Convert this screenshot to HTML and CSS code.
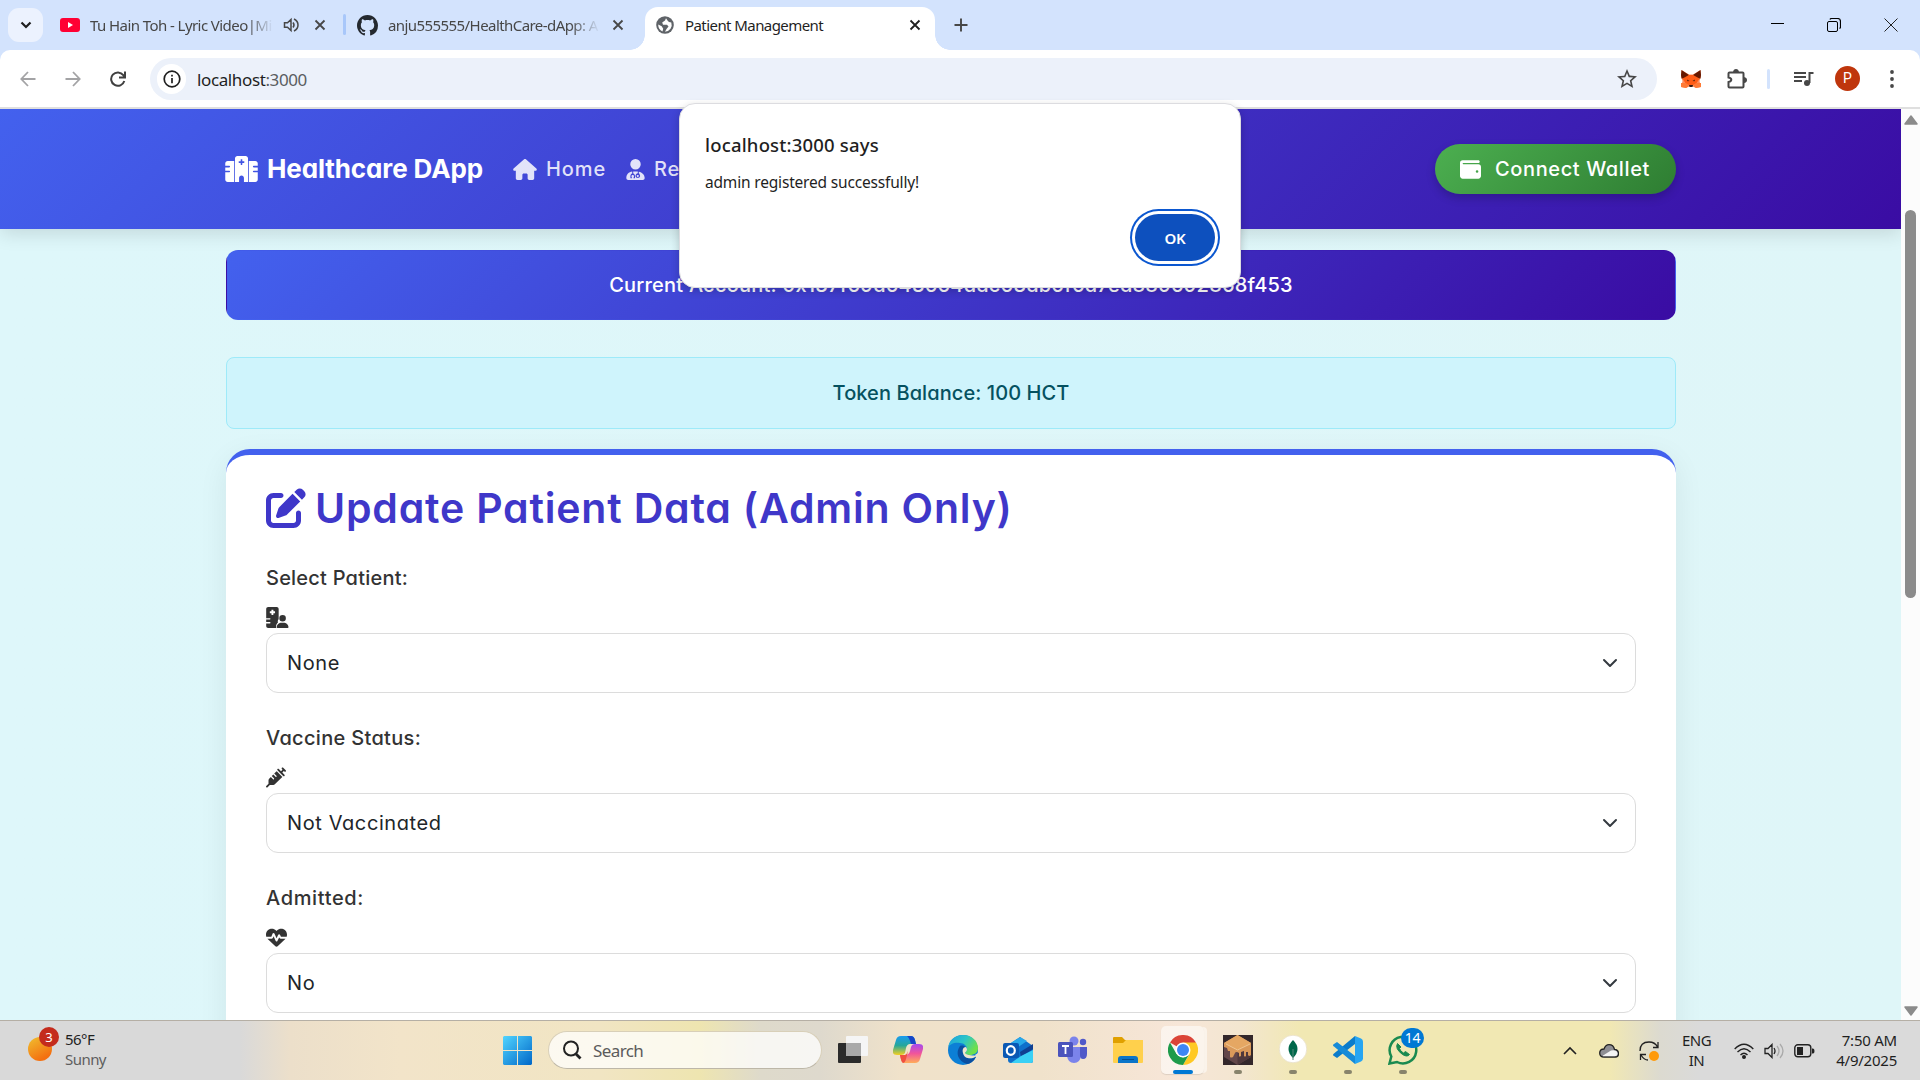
FILE: index.html
```html
<!DOCTYPE html>
<html lang="en">
<head>
<meta charset="utf-8">
<title>Patient Management</title>
<link rel="stylesheet" href="styles.css">
</head>
<body>
<div class="tabstrip">
  <div class="tab-search"><svg width="14" height="14" viewBox="0 0 14 14"><path d="M2.500 4.500 7 9l4.500-4.500" fill="none" stroke="#1f1f1f" stroke-width="2.200"/></svg></div>
  <div class="tab tab-video">
    <svg width="20" height="14" viewBox="0 0 20 14"><rect width="20" height="14" rx="3" fill="#ff0033"/><path d="M8 4v6l5-3z" fill="#fff"/></svg>
    <span class="tab-title fade">Tu Hain Toh - Lyric Video|Mi</span>
    <svg class="speaker" width="16" height="16" viewBox="0 0 16 16" fill="none" stroke="#474747" stroke-width="1.500"><path d="M1.500 5.800h3L8 2.500v11L4.500 10.200h-3zM10 5.500q2 2.500 0 5M11 2q4 2 4 6t-4 6"/></svg>
    <svg class="x" width="12" height="12" viewBox="0 0 12 12"><path d="m1.500 1.500 9 9m0-9-9 9" stroke="#474747" stroke-width="1.800"/></svg>
  </div>
  <div class="tab-sep"></div>
  <div class="tab tab-repo">
    <svg width="21" height="21" viewBox="0 0 16 16"><path fill="#24292f" d="M8 0C3.580 0 0 3.580 0 8c0 3.540 2.290 6.530 5.470 7.590.4.070.550-.170.550-.380 0-.190-.010-.820-.010-1.490-2.010.370-2.530-.490-2.690-.940-.090-.230-.480-.940-.820-1.130-.280-.150-.680-.520-.010-.530.630-.010 1.080.580 1.230.820.720 1.210 1.870.870 2.330.660.070-.520.280-.870.510-1.070-1.780-.200-3.640-.890-3.640-3.950 0-.870.310-1.590.820-2.150-.080-.200-.360-1.020.080-2.120 0 0 .670-.210 2.200.820.640-.180 1.320-.270 2-.270s1.360.090 2 .270c1.530-1.040 2.200-.820 2.200-.820.440 1.100.160 1.920.080 2.120.510.560.820 1.270.820 2.150 0 3.070-1.870 3.750-3.650 3.950.290.250.540.730.540 1.480 0 1.070-.010 1.930-.010 2.200 0 .210.150.460.550.380A8.010 8.010 0 0 0 16 8c0-4.420-3.580-8-8-8z"/></svg>
    <span class="tab-title fade">anju555555/HealthCare-dApp: A</span>
    <svg class="x" width="12" height="12" viewBox="0 0 12 12"><path d="m1.500 1.500 9 9m0-9-9 9" stroke="#474747" stroke-width="1.800"/></svg>
  </div>
  <div class="tab tab-active">
    <svg width="18" height="18" viewBox="0 0 18 18"><circle cx="9" cy="9" r="8.800" fill="#5f6368"/><path d="M10 2.200 9 4.500 6.200 6.500l.8 2.300h4l1.500 1.700-2 2.500-1.500 2.800q3.500-.2 5.500-3t.8-6.300l-2.300-.5-1.500-1.500zM2.200 8.500l3.500 1.800 1.500 2.500-.7 2.700Q2.200 13.500 2.200 8.500z" fill="#fff"/></svg>
    <span class="tab-title">Patient Management</span>
    <svg class="x" width="12" height="12" viewBox="0 0 12 12"><path d="m1.500 1.500 9 9m0-9-9 9" stroke="#1f1f1f" stroke-width="1.800"/></svg>
  </div>
  <svg class="newtab" width="14" height="14" viewBox="0 0 14 14"><path d="M7 .5v13M.5 7h13" stroke="#474747" stroke-width="1.900"/></svg>
  <div class="winbtns">
    <svg width="14" height="14" viewBox="0 0 14 14"><path d="M1 5.500h13" stroke="#000"/></svg>
    <svg width="14" height="14" viewBox="0 0 14 14" fill="none" stroke="#000"><rect x=".5" y="3.500" width="10" height="10" rx="1.500"/><path d="M3 1.500Q3.300.5 4.500.5h6q3 0 3 3v5.500q0 1-1 1.500" stroke-width="1.200"/></svg>
    <svg width="14" height="14" viewBox="0 0 14 14"><path d="m.5.5 13 13m0-13-13 13" stroke="#222"/></svg>
  </div>
</div>

<div class="toolbar-wrap"><div class="toolbar">
  <svg class="nav back" width="16" height="16" viewBox="0 0 16 16" fill="none" stroke="#a3a3a5" stroke-width="1.800"><path d="M15.500 8H1.500M8 1 1.300 8 8 15"/></svg>
  <svg class="nav forward" width="16" height="16" viewBox="0 0 16 16" fill="none" stroke="#a3a3a5" stroke-width="1.800"><path d="M.5 8h14M8 1l6.700 7L8 15"/></svg>
  <svg class="nav reload" width="16" height="16" viewBox="0 0 16 16" fill="none" stroke="#404040" stroke-width="2"><path d="M14.300 10A6.700 6.700 0 1 1 13.300 4.200L14.500 6M15 .5V6.500H9"/></svg>
  <div class="omnibox">
    <div class="site-info"><svg width="18" height="18" viewBox="0 0 18 18" fill="none" stroke="#1f1f1f"><circle cx="9" cy="9" r="7.800" stroke-width="1.700"/><path d="M9 8v5.200M9 4.700v1.800" stroke-width="1.700"/></svg></div>
    <span class="url">localhost<span class="port">:3000</span></span>
    <svg class="star" width="20" height="20" viewBox="2 2 20 20"><path fill="#474747" d="m22 9.240-7.190-.620L12 2 9.190 8.630 2 9.240l5.460 4.730L5.820 21 12 17.270 18.180 21l-1.630-7.030L22 9.240zM12 15.400l-3.760 2.270 1-4.280-3.320-2.880 4.380-.380L12 6.100l1.710 4.040 4.380.380-3.320 2.880 1 4.280L12 15.400z"/></svg>
  </div>
  <svg class="fox" width="20" height="18" viewBox="0 0 20 18"><path d="M.5 0 8 4.500h4L19.500 0 20 6l-1.500 5L20 17l-5 1-3-1.500H8L5 18l-5-1 1.500-6L0 6z" fill="#ff8d5d"/><path d="M.5 0 8 5 5.500 8.500.5 8.500 0 5zM19.500 0 12 5l2.500 3.500h5L20 5z" fill="#661800"/><path d="M1.500 8.500 8 5h4l6.500 3.500L15 14l-3 1H8l-3-1z" fill="#ff5c16"/><path d="M0 13h5l3 3-3 2-5-1zM20 13h-5l-3 3 3 2 5-1z" fill="#ff7a35"/><path d="M6 9.500 8.500 11l-2 .3zM14 9.500 11.500 11l2 .3zM8 15h4l-.5 2h-3z" fill="#3a1a10"/></svg>
  <svg class="puzzle" width="22" height="22" viewBox="0 0 22 22"><path d="M3.500 4h4.500q.3-2 2-2t2 2h4q2 0 2 2v4q2.500.2 2.500 2t-2.500 2v4q0 2-2 2H3.500q-1.500 0-1.500-1.500v-4q2.500-.7 2.500-2.500T2 9.500v-4Q2 4 3.500 4z" fill="#fff"/><path d="M3.500 4.500h13q1 0 1 1v13q0 1-1 1h-13q-1 0-1-1V14q2.800-.7 2.800-2.300T2.500 9.500v-4q0-1 1-1z" fill="none" stroke="#474747" stroke-width="2"/><path d="M7 4q.5-3 3-3t3 3zM18 9q3 .5 3 3t-3 3z" fill="#474747"/></svg>
  <div class="tool-sep"></div>
  <svg class="queue" width="20" height="16" viewBox="0 0 20 16" fill="none" stroke="#474747" stroke-width="2"><path d="M0 2h12M0 6h12M0 10h8M15.500 12V2H19.500"/><circle cx="13" cy="12" r="3" fill="#474747" stroke="none"/></svg>
  <div class="avatar">P</div>
  <svg class="dots" width="4" height="18" viewBox="0 0 4 18" fill="#474747"><circle cx="2" cy="2" r="1.900"/><circle cx="2" cy="9" r="1.900"/><circle cx="2" cy="16" r="1.900"/></svg>
</div></div>

<div class="viewport">
  <div class="page">
    <header class="navbar">
      <svg class="brand-icon" width="33" height="26" viewBox="0 0 640 512"><path fill="#fff" fill-rule="evenodd" d="M192 48c0-26.500 21.500-48 48-48h160c26.500 0 48 21.500 48 48v464h-80v-80c0-26.500-21.500-48-48-48s-48 21.500-48 48v80h-80zM48 96h128v416H48c-26.500 0-48-21.500-48-48V320h80c8.800 0 16-7.200 16-16s-7.200-16-16-16H0v-64h80c8.800 0 16-7.200 16-16s-7.200-16-16-16H0v-48c0-26.500 21.500-48 48-48zM464 96h128c26.500 0 48 21.500 48 48v48h-80c-8.800 0-16 7.200-16 16s7.200 16 16 16h80v64h-80c-8.800 0-16 7.200-16 16s7.200 16 16 16h80v144c0 26.500-21.500 48-48 48H464zM304 72v32h-32c-5 0-8 3-8 8v16c0 5 3 8 8 8h32v32c0 5 3 8 8 8h16c5 0 8-3 8-8v-32h32c5 0 8-3 8-8v-16c0-5-3-8-8-8h-32V72c0-5-3-8-8-8h-16c-5 0-8 3-8 8z"/></svg>
      <span class="brand">Healthcare DApp</span>
      <svg class="home-icon" width="24" height="21" viewBox="0 0 576 512"><path d="M575.800 255.500c0 18-15 32.100-32 32.100h-32l.7 160.200c0 2.700-.2 5.400-.5 8.100V472c0 22.100-17.900 40-40 40H456c-1.100 0-2.200 0-3.300-.1c-1.400 .1-2.800 .1-4.200 .1H416 392c-22.100 0-40-17.900-40-40V448 384c0-17.700-14.300-32-32-32H256c-17.700 0-32 14.300-32 32v64 24c0 22.100-17.900 40-40 40H160 128.100c-1.500 0-3-.1-4.500-.2c-1.200 .1-2.400 .2-3.600 .2H104c-22.100 0-40-17.900-40-40V360c0-.9 0-1.900 .1-2.800V287.600H32c-18 0-32-14-32-32.100c0-9 3-17 10-24L266.400 8c7-7 15-8 22-8s15 2 21 7L564.800 231.500c8 7 12 15 11 24z"/></svg>
      <span class="nav-link nav-home">Home</span>
      <svg class="doctor-icon" width="19" height="21" viewBox="0 0 448 512"><path fill-rule="evenodd" d="M224 256A128 128 0 1 0 224 0a128 128 0 1 0 0 256zM144 306v50c-27 8-44 33-44 63v37c0 9 5 12 12 12h24v-26h-10v-23c0-36 60-36 60 0v23h-10v26h20c9 0 16-3 16-12v-37c0-30-17-55-44-63v-50q56-6 112 0v40c-32 7-56 36-56 70 0 65 112 65 112 0 0-34-24-63-32-70v-38c84 18 144 75 144 156 0 26-21 48-48 48H48c-27 0-48-22-48-48 0-88 60-145 144-158zM280 390a24 24 0 1 0 .1 0z"/></svg>
      <span class="nav-link">Register</span>
      <button class="wallet">
        <svg width="21" height="21" viewBox="0 0 512 512"><path fill="#fff" d="M64 32C28.700 32 0 60.700 0 96V416c0 35.300 28.700 64 64 64H448c35.300 0 64-28.700 64-64V192c0-35.300-28.700-64-64-64H80c-8.800 0-16-7.200-16-16s7.200-16 16-16H448c17.700 0 32-14.300 32-32s-14.300-32-32-32H64zM416 272a32 32 0 1 1 0 64 32 32 0 1 1 0-64z"/></svg>
        <span class="wallet-label">Connect Wallet</span>
      </button>
    </header>
    <main class="content">
      <div class="account"><span>Current Account: 0x137f69d643664adc63db6f6d7ed889692868f453</span></div>
      <div class="balance"><span>Token Balance: 100 HCT</span></div>
      <section class="card">
        <h2 class="card-title"><svg width="40" height="40" viewBox="0 0 512 512"><path fill="#3f37c9" d="M471.600 21.700c-21.900-21.900-57.300-21.900-79.200 0L362.300 51.700l97.900 97.900 30.100-30.100c21.900-21.900 21.900-57.300 0-79.200L471.600 21.700zm-299.200 220c-6.100 6.100-10.800 13.600-13.500 21.900l-29.600 88.800c-2.900 8.600-.6 18.100 5.800 24.600s15.900 8.700 24.600 5.800l88.800-29.600c8.200-2.700 15.700-7.400 21.900-13.500L437.700 172.300 339.700 74.300 172.400 241.700zM96 64C43 64 0 107 0 160V416c0 53 43 96 96 96H352c53 0 96-43 96-96V320c0-17.700-14.300-32-32-32s-32 14.300-32 32v96c0 17.700-14.300 32-32 32H96c-17.700 0-32-14.300-32-32V160c0-17.700 14.300-32 32-32h96c17.700 0 32-14.300 32-32s-14.300-32-32-32H96z"/></svg><span>Update Patient Data (Admin Only)</span></h2>
        <div class="field">
          <label class="label-patient">Select Patient:</label>
          <svg width="24" height="21" viewBox="0 0 576 512"><path fill="#333" fill-rule="evenodd" d="M48 0h208c26 0 48 22 48 48v250c-25 20-24 60-16 78-28 25-48 60-48 104 0 12 3 24 9 32H48c-27 0-48-22-48-48V400h90c9 0 16-7 16-16s-7-16-16-16H0v-64h90c9 0 16-7 16-16s-7-16-16-16H0V48C0 22 22 0 48 0zM136 64c-5 0-8 3-8 8v32H96c-5 0-8 3-8 8v32c0 5 3 8 8 8h32v32c0 5 3 8 8 8h32c5 0 8-3 8-8v-32h32c5 0 8-3 8-8v-32c0-5-3-8-8-8h-32V72c0-5-3-8-8-8zM400 192a80 80 0 1 1 0 160 80 80 0 1 1 0-160zM377 384h46c67 0 121 50 121 108 0 11-9 20-20 20H276c-11 0-20-9-20-20 0-58 54-108 121-108z"/></svg>
          <div class="select"><span>None</span><svg width="16" height="16" viewBox="0 0 16 16"><path fill="none" stroke="#343a40" stroke-linecap="round" stroke-linejoin="round" stroke-width="2" d="m2 5 6 6 6-6"/></svg></div>
        </div>
        <div class="field">
          <label class="label-vaccine">Vaccine Status:</label>
          <svg width="20" height="21" viewBox="0 0 512 512"><path fill="#333" d="M441 7l32 32 32 32c9.400 9.400 9.400 24.600 0 33.900s-24.600 9.400-33.900 0l-15-15L417.900 128l55 55c9.400 9.400 9.400 24.600 0 33.900s-24.600 9.400-33.900 0l-72-72L295 73c-9.400-9.400-9.400-24.600 0-33.900s24.600-9.400 33.900 0l55 55L422.100 56 407 41c-9.400-9.400-9.400-24.600 0-33.900s24.600-9.400 33.900 0zM210.300 155.700l61.100-61.100c.3 .3 .6 .7 1 1l16 16 56 56 56 56 16 16c.3 .3 .6 .6 1 1l-191 191c-10.500 10.500-24.700 16.400-39.600 16.400H97.900L41 505c-9.400 9.400-24.600 9.400-33.900 0s-9.400-24.600 0-33.900l57-57V325.300c0-14.900 5.900-29.100 16.400-39.600l43.300-43.300 57 57c6.200 6.200 16.400 6.200 22.600 0s6.200-16.400 0-22.600l-57-57 41.400-41.400 57 57c6.200 6.200 16.400 6.200 22.600 0s6.200-16.400 0-22.600l-57-57z"/></svg>
          <div class="select"><span>Not Vaccinated</span><svg width="16" height="16" viewBox="0 0 16 16"><path fill="none" stroke="#343a40" stroke-linecap="round" stroke-linejoin="round" stroke-width="2" d="m2 5 6 6 6-6"/></svg></div>
        </div>
        <div class="field">
          <label class="label-admitted">Admitted:</label>
          <svg width="21" height="21" viewBox="0 0 512 512"><path fill="#333" d="M228.300 469.100L47.600 300.400c-4.200-3.900-8.200-8.100-11.900-12.400h87c22.600 0 43-13.600 51.700-34.500l10.500-25.200 49.300 109.500c3.800 8.500 12.100 14 21.400 14.100s17.800-5 22-13.300L320 253.700l1.700 3.400c9.500 19 28.900 31 50.100 31H476.300c-3.700 4.300-7.700 8.500-11.900 12.400L283.700 469.100c-7.500 7-17.400 10.900-27.700 10.900s-20.200-3.900-27.700-10.900zM503.700 240h-132c-3 0-5.800-1.700-7.200-4.400l-23.200-46.300c-4.100-8.100-12.400-13.300-21.500-13.300s-17.400 5.100-21.500 13.300l-41.400 82.800L205.900 158.200c-3.900-8.700-12.700-14.300-22.200-14.100s-18.100 5.900-21.800 14.800l-31.800 76.300c-1.200 3-4.200 4.900-7.400 4.900H16c-2.600 0-5 .4-7.300 1.100C3 225.200 0 208.200 0 190.900v-5.800c0-69.900 50.500-129.500 119.400-141C165 36.500 211.400 51.400 244 84l12 12 12-12c32.600-32.600 79-47.500 124.600-39.900C461.500 55.600 512 115.200 512 185.100v5.800c0 16.900-2.800 33.500-8.300 49.100z"/></svg>
          <div class="select"><span>No</span><svg width="16" height="16" viewBox="0 0 16 16"><path fill="none" stroke="#343a40" stroke-linecap="round" stroke-linejoin="round" stroke-width="2" d="m2 5 6 6 6-6"/></svg></div>
        </div>
      </section>
    </main>
  </div>
  <div class="scrollbar">
    <svg width="14" height="10" viewBox="0 0 14 10"><path d="M7 1 13 9H1z" fill="#8b8b8b" stroke="#8b8b8b" stroke-width="1.500" stroke-linejoin="round"/></svg>
    <div class="thumb"></div>
    <svg class="down" width="14" height="10" viewBox="0 0 14 10"><path d="M7 9 13 1H1z" fill="#8b8b8b" stroke="#8b8b8b" stroke-width="1.500" stroke-linejoin="round"/></svg>
  </div>
</div>

<div class="taskbar">
  <div class="weather">
    <div class="sun"><span class="sun-badge">3</span></div>
    <div class="weather-text"><span>56°F</span><span class="sunny">Sunny</span></div>
  </div>
  <div class="apps">
    <svg class="start" width="29" height="29" viewBox="0 0 29 29"><defs><linearGradient id="win" x1="0" y1="0" x2="1" y2="1"><stop offset="0" stop-color="#52d5ff"/><stop offset="1" stop-color="#0067c8"/></linearGradient></defs><path fill="url(#win)" d="M1 0h13v14H0V1zM15 0h13l1 1v13H15zM0 15h14v14H1l-1-1zM15 15h14v13l-1 1H15z"/></svg>
    <div class="search"><svg width="20" height="20" viewBox="0 0 20 20" fill="none" stroke="#222"><circle cx="9" cy="8.500" r="7" stroke-width="2"/><path d="m14 14 4.500 4.500" stroke-width="2.800"/></svg><span>Search</span></div>
    <div class="app"><svg width="30" height="30" viewBox="0 0 30 30"><rect x="0" y="8" width="23" height="20" rx="1" fill="#2b2b2b"/><rect x="8" y="1" width="22" height="20" rx="1" fill="#f5f5f5"/><path d="M8 8h15v13H8z" fill="#a9a9a9"/></svg></div>
    <div class="app"><svg width="30" height="30" viewBox="0 0 30 30"><defs><linearGradient id="ca" x1="0" y1="0" x2="0" y2="1"><stop offset="0" stop-color="#1a9bf0"/><stop offset=".5" stop-color="#26a79a"/><stop offset="1" stop-color="#f5cf20"/></linearGradient><linearGradient id="cb" x1="0" y1="0" x2="0" y2="1"><stop offset="0" stop-color="#a44af0"/><stop offset=".5" stop-color="#f1559a"/><stop offset="1" stop-color="#ffad5a"/></linearGradient></defs><path d="M8 1h10q3 0 4 4l1 4h-6q-3 0-4 4l-1 5q-1 2-4 2H4q-5 0-4-5L3 5q1-4 5-4z" fill="url(#ca)"/><path d="M14 1h4q3 0 4 4l1 4h-5q-2-7-4-8z" fill="#1546c8"/><path d="M22 28H12q-3 0-4-4l-1-4h5q4 0 5-4l1-4q1-3 4-3h4q5 0 4 5l-3 10q-1 4-5 4z" fill="url(#cb)"/><path d="M7 20h5q2-1 3-4l-2 8q-1 4-3 4-2-1-3-8z" fill="#f05040"/></svg></div>
    <div class="app"><svg width="30" height="30" viewBox="0 0 30 30"><defs><linearGradient id="ea" x1="0" y1="0" x2="1" y2=".5"><stop offset="0" stop-color="#1b9de2"/><stop offset=".55" stop-color="#2cc6c6"/><stop offset="1" stop-color="#6fe04a"/></linearGradient></defs><circle cx="15" cy="15" r="15" fill="#0c7fd6"/><path d="M0 13C1 5 7 0 15 0c9 0 15 6 15 13 0 5-4 7-8 7-3 0-5-1-5-2s2-1 2-4-3-6-7-6C7 7 1 9 0 13z" fill="url(#ea)"/><path d="M12 11c-5 7-2 15 7 18 3 0 7-3 9-7-6 3-13 1-13-5 0-3 2-4 2-5s-3-2-5-1z" fill="#0b4fa0"/><path d="M17 18c0-1 2-1 2-4l-1-2c-3 0-4 3-3 6 1 5 6 6 10 5l4-2c-3-1-10 0-12-3z" fill="#f0e4cd"/><path d="M27 20l3-2v6h-3q1-1 1-2z" fill="#f0e4cd"/></svg></div>
    <div class="app"><svg width="30" height="30" viewBox="0 0 30 30"><path d="M5 10 17 2l13 9v15q0 2-2 2H8q-3 0-3-3z" fill="#0f6fcb"/><path d="m5 10 12-8 7 4-16 11z" fill="#28a8ea"/><path d="M17 17 30 9v5L18 22z" fill="#103f91"/><path d="M30 15v11q0 2-2 2H8l10-7z" fill="#3ad0f5"/><rect y="8" width="16" height="15" rx="2" fill="#0a58b4"/><ellipse cx="7.800" cy="15.500" rx="4" ry="4.400" fill="none" stroke="#fff" stroke-width="2.200"/></svg></div>
    <div class="app"><svg width="30" height="30" viewBox="0 0 30 30"><circle cx="16" cy="6" r="4.500" fill="#7b83eb"/><circle cx="25" cy="7" r="3.200" fill="#5059c9"/><path d="M9 12h14v9q-1 7-7 7t-7-7z" fill="#7b83eb"/><path d="M22 12h7v7q0 5-4 5-3 0-3-4z" fill="#5059c9"/><rect y="7" width="15" height="15" rx="1.500" fill="#4b53bc"/><path d="M4 11h7M7.500 11v8" stroke="#fff" stroke-width="1.800"/></svg></div>
    <div class="app"><svg width="30" height="30" viewBox="0 0 30 30"><path d="M0 3q0-1 1-1h8l3 3h17q1 0 1 1v6H0z" fill="#e0a000"/><path d="M0 8h10l3-3h17v22q0 1-1 1H1q-1 0-1-1z" fill="#ffd04c"/><path d="M5 28v-4q0-3 3-3h14q3 0 3 3v4z" fill="#0b75c9"/><path d="M9 24.500h12" stroke="#064f90"/></svg></div>
    <div class="app active"><svg width="30" height="30" viewBox="0 0 30 30"><path d="M15 15 2 7.500A15 15 0 0 1 28 7.500z" fill="#db4437"/><path d="M28 7.500H15L21.500 19 15 30A15 15 0 0 0 28 7.500z" fill="#ffc925"/><path d="M2 7.500 8.500 19l6.500 3.500 6-3L15 30A15 15 0 0 1 2 7.500z" fill="#1e9b4b"/><circle cx="15" cy="15" r="7.500" fill="#fff"/><circle cx="15" cy="15" r="6" fill="#3f86f4"/></svg><i class="run run-active"></i></div>
    <div class="app"><svg width="30" height="30" viewBox="0 0 30 30"><path d="M0 0h30v30H0z" fill="#33272b"/><path d="M1 8v14l13.500 8L28 22V8z" fill="#63474a"/><path d="M14.500 15v15L28 22V8z" fill="#4e383c"/><path d="M1 8 14.500 0 28 8v12q-2 2-3 0v-3h-2v4q-1 1-2 0v-5l-3 1v4q-2 1-2 0v-3q-3-2-4 0l-2 4q-2 1-3 0v-6H5l-1-3-3-1z" fill="#d9995a"/><path d="m1 8 13.500 7L28 8 14.500 0z" fill="#e5a763"/><path d="m3 9 11.500 6L27 9" fill="none" stroke="#f2cf9f" stroke-width=".8"/></svg><i class="run"></i></div>
    <div class="app"><svg width="30" height="30" viewBox="0 0 30 30"><circle cx="15" cy="14" r="13.800" fill="#fff" stroke="#e8dfc8" stroke-width=".8"/><path d="M15 5q-9 9 0 18 9-9 0-18z" fill="#00684a"/><path d="M15 14v11" stroke="#55887a"/></svg><i class="run"></i></div>
    <div class="app"><svg width="30" height="30" viewBox="0 0 30 30"><path d="m22 1 6 2.500q2 1 2 3v17q0 2-2 3L22 29z" fill="#27a5f2"/><path d="M22 1v8L4 23l-3-2q-2-1 0-2.500z" fill="#0b7ccb"/><path d="M22 29v-8L4 7 1 9q-2 1 0 2.500z" fill="#168bd8"/></svg><i class="run"></i></div>
    <div class="app"><svg width="30" height="30" viewBox="0 0 30 30" fill="none" stroke="#1a8a50"><path d="M1.500 28.500 3.300 21.500A13.300 13.300 0 1 1 9 27z" stroke-width="2.500"/><path d="M9.500 8.500q-3 5 5 11 5 3 7 0l-4-3-2 1.500q-3-1.500-4-4.500l1.500-1.500z" fill="#1a8a50" stroke-width="1"/></svg><span class="badge">14</span><i class="run"></i></div>
  </div>
  <div class="tray">
    <svg class="chev" width="14" height="10" viewBox="0 0 14 10"><path d="m1 8 6-6 6 6" fill="none" stroke="#222" stroke-width="1.600"/></svg>
    <svg class="cloud" width="20" height="14" viewBox="0 0 20 14"><path d="M5 13q-4.300 0-4.300-4T5 5q1.500-4.300 5-4.300 4.500 0 5.500 4.800 4 .3 4 4T16 13z" fill="#8f8f94" stroke="#222" stroke-width="1.300"/><path d="m4 11.500 8-5q6-1 6.500 3 0 2.500-3 2.700H4z" fill="#f4f4f4"/></svg>
    <svg class="sync" width="20" height="22" viewBox="0 0 20 22"><path d="M1 11Q1 2 10 2q6 0 8.500 5M19 2v5.500h-5M9 20q-4 0-7-5M1.500 20v-5.500H7" fill="none" stroke="#222" stroke-width="1.300"/><circle cx="15" cy="16" r="5" fill="#ff9a0a"/></svg>
    <div class="lang"><span>ENG</span><span>IN</span></div>
    <svg class="wifi" width="20" height="16" viewBox="0 0 20 16" fill="none" stroke="#222" stroke-width="1.400"><path d="M.7 6q9.300-9.500 18.600 0M3.500 9q6.500-6.500 13 0M6.500 12q3.500-3.500 7 0"/><circle cx="10" cy="14" r="1.300" fill="#222"/></svg>
    <svg class="vol" width="21" height="16" viewBox="0 0 21 16" fill="none" stroke="#222" stroke-width="1.300"><path d="M1 5.500h3L8 1.500v13l-4-4H1zM10 5q2 3 0 6"/><path d="M13 3q4 5 0 10M16 1q6 7 0 14" stroke="#aaa"/></svg>
    <svg class="batt" width="21" height="14" viewBox="0 0 21 14"><rect x=".8" y=".8" width="16" height="12" rx="3" fill="none" stroke="#222" stroke-width="1.400"/><path d="M3 3h6v8H3zM18 4.500h1q1.500 0 1.500 2.500T19 9.500h-1z" fill="#222"/></svg>
    <div class="clock"><span>7:50 AM</span><span>4/9/2025</span></div>
  </div>
</div>

<div class="dialog">
  <h1>localhost:3000 says</h1>
  <p>admin registered successfully!</p>
  <button class="ok">OK</button>
</div>
</body>
</html>
```
FILE: styles.css
```css
* { box-sizing: border-box; }
body {
  margin: 0;
  width: 1920px;
  height: 1080px;
  overflow: hidden;
  display: flex;
  flex-direction: column;
  position: relative;
  font-family: "Noto Sans", "Open Sans", sans-serif;
  color: #1f1f1f;
}
svg { display: block; flex: none; }
button { border: 0; font: inherit; }

/* Tab strip */
.tabstrip { height: 50px; flex: none; display: flex; background: #d3e3fd; font-size: 15px; letter-spacing: -.57px; white-space: nowrap; }
.tab-search { width: 35px; height: 34px; margin: 8px 17px 0 8px; border-radius: 11px; background: #ecf2fe; display: grid; place-items: center; }
.tab { height: 50px; display: flex; align-items: center; }
.tab-title { color: #474747; }
.fade { flex: none; -webkit-mask-image: linear-gradient(90deg, #000 86%, transparent); mask-image: linear-gradient(90deg, #000 86%, transparent); }
.tab-video { width: 283px; }
.tab-video .tab-title { width: 183px; margin-left: 10px; }
.tab-video .speaker { margin-left: 10px; }
.tab-video .x { margin-left: 15px; }
.tab-sep { width: 3px; height: 21px; margin-top: 14px; border-radius: 2px; background: #a8c7fa; }
.tab-repo { width: 299px; padding-left: 11px; }
.tab-repo .tab-title { width: 212px; margin-left: 10px; }
.tab-repo .x { margin-left: 12px; }
.tab-active { position: relative; width: 290px; height: 43px; margin-top: 7px; padding: 0 14px 7px 11px; border-radius: 13px 13px 0 0; background: #fff; }
.tab-active::before, .tab-active::after { content: ""; position: absolute; bottom: 0; width: 15px; height: 15px; }
.tab-active::before { left: -15px; background: radial-gradient(circle at 0 0, transparent 14.500px, #fff 15px); }
.tab-active::after { right: -15px; background: radial-gradient(circle at 100% 0, transparent 14.500px, #fff 15px); }
.tab-active .tab-title { margin-left: 11px; color: #1f1f1f; }
.tab-active .x { margin-left: auto; }
.newtab { margin: 18px 0 0 19px; }
.winbtns { margin: 18px 22px 0 auto; display: flex; gap: 43px; }

/* Toolbar */
.toolbar-wrap { flex: none; background: #d3e3fd; }
.toolbar { height: 59px; border-bottom: 2px solid #dfdfdf; border-radius: 10px 10px 0 0; background: #fff; display: flex; align-items: center; }
.back { margin-left: 20px; }
.forward { margin-left: 29px; }
.reload { margin-left: 29px; }
.omnibox { width: 1507px; height: 42px; margin-left: 24px; padding: 0 20px 0 7px; border-radius: 21px; background: #ecf1fa; display: flex; align-items: center; font-size: 17px; }
.site-info { width: 29px; height: 30px; border-radius: 15px; background: #fff; display: grid; place-items: center; }
.url { margin-left: 11px; letter-spacing: -.38px; padding-top: 1px; }
.port { color: #5a5d61; }
.star { margin-left: auto; }
.fox { margin-left: 24px; }
.puzzle { margin-left: 25px; }
.tool-sep { width: 3px; height: 20px; margin-left: 19px; border-radius: 2px; background: #d3e3fd; }
.queue { margin-left: 24px; }
.avatar { width: 25px; height: 25px; margin-left: 21px; border-radius: 50%; background: #bf360c; color: #fff; font: 14px/25px Roboto, sans-serif; text-align: center; }
.dots { margin-left: 30px; }

/* Web page */
.viewport { height: 911px; flex: none; display: flex; overflow: hidden; }
.page { width: 1901px; flex: none; background: linear-gradient(90deg, #def7fa, #dff6f8); font-family: Inter, sans-serif; font-feature-settings: "cv11"; color: #333; overflow: hidden; white-space: nowrap; }
.navbar { height: 120px; padding: 0 225px; display: flex; align-items: center; background: linear-gradient(135deg, #4361ee, #3a0ca3); box-shadow: 0 5px 18px rgba(0, 0, 0, .12); position: relative; }
.brand { width: 216px; margin-left: 9px; padding-bottom: 2px; color: #fff; font-size: 26px; font-weight: 700; letter-spacing: -.11px; }
.home-icon { margin-left: 30px; fill: rgba(255, 255, 255, .85); }
.doctor-icon { margin-left: 20px; fill: rgba(255, 255, 255, .85); }
.nav-link { margin-left: 9px; color: rgba(255, 255, 255, .85); font-size: 20px; font-weight: 500; letter-spacing: .88px; }
.nav-home { width: 60px; }
.wallet { width: 241px; height: 50px; margin-left: auto; padding: 0 0 0 25px; border-radius: 25px; background: linear-gradient(135deg, #4caf50, #2e7d32); box-shadow: 0 4px 10px rgba(0, 0, 0, .2); display: flex; align-items: center; gap: 14px; color: #fff; font-size: 20px; font-weight: 500; }
.wallet-label { letter-spacing: .62px; }
.content { padding: 21px 225px 0 226px; }
.account { height: 70px; border: 1px solid transparent; border-radius: 12px; background: linear-gradient(135deg, #4361ee, #3a0ca3); color: #fff; font-size: 20px; font-weight: 500; letter-spacing: .22px; display: grid; place-items: center; }
.balance { height: 72px; margin-top: 37px; border: 1px solid #9eeaf9; border-radius: 8px; background: #cff4fc; color: #055160; font-size: 20px; font-weight: 500; letter-spacing: .08px; display: grid; place-items: center; }
.card { height: 720px; margin-top: 20px; padding: 33px 40px; border-top: 6px solid #4361ee; border-radius: 24px; background: #fff; box-shadow: 0 8px 30px rgba(0, 0, 0, .07); }
.card-title { height: 40px; margin: 0 0 36px; display: flex; align-items: center; gap: 9px; color: #3f37c9; font-size: 41px; font-weight: 600; letter-spacing: .8px; line-height: 40px; }
.field { height: 160px; display: flex; flex-direction: column; align-items: flex-start; }
.field label { height: 28px; margin-bottom: 15px; font-size: 20px; font-weight: 500; line-height: 28px; }
.label-patient { letter-spacing: .22px; }
.label-vaccine { letter-spacing: .32px; }
.label-admitted { letter-spacing: .64px; }
.select { width: 1370px; height: 60px; margin-top: 5px; padding: 0 17px 0 20px; border: 1px solid #dcdcdc; border-radius: 12px; display: flex; align-items: center; justify-content: space-between; color: #212529; font-size: 20px; letter-spacing: .6px; }

/* Scrollbar */
.scrollbar { width: 19px; background: #fcfcfc; display: flex; flex-direction: column; align-items: center; padding: 6px 0 4px; }
.thumb { width: 11px; height: 388px; margin-top: 85px; border-radius: 6px; background: #8b8b8b; }
.down { margin-top: auto; }

/* Taskbar */
.taskbar { height: 60px; flex: none; position: relative; display: flex; border-top: 1px solid #b5afa5; background: linear-gradient(90deg, #d9d9d9 0, #d9d9d9 240px, #ecdfca 290px, #f2e4c9 400px, #f1e5c3 600px, #eee5b0 700px, #dedacb 760px, #ded9cd 820px, #f0e2ca 900px, #f0e2cb 1040px, #f7e6d8 1180px, #f3e6d0 1240px, #f1e8b3 1300px, #f1e8b3 1610px, #dcdad0 1660px, #dadada 1700px); }
.weather { width: 503px; padding-left: 28px; display: flex; }
.sun { position: relative; width: 24px; height: 24px; margin-top: 16px; border-radius: 50%; background: linear-gradient(150deg, #f0c030, #f47010 80%); }
.sun-badge { position: absolute; left: 11px; top: -10px; width: 20px; height: 20px; border-radius: 50%; background: #c42b1c; color: #fff; font-size: 13px; line-height: 20px; text-align: center; }
.weather-text { margin: 8px 0 0 13px; display: flex; flex-direction: column; font-size: 15px; letter-spacing: -.55px; line-height: 20px; }
.sunny { color: #5e5e5e; }
.apps { display: flex; }
.start { margin-top: 15px; }
.search { width: 274px; height: 38px; margin: 10px 2px 0 16px; padding-left: 13px; border: 1px solid #d8cfb8; border-bottom-color: #bdb7a8; border-radius: 19px; background: rgba(255, 255, 255, .75); display: flex; align-items: center; gap: 11px; color: #5b5b5b; font-size: 17px; letter-spacing: -.6px; }
.app { position: relative; width: 43px; height: 48px; margin: 5px 5px 0 7px; display: grid; place-items: center; padding-bottom: 1px; }
.active { border-radius: 5px; background: rgba(255, 255, 255, .55); box-shadow: 4px 0 0 -1px rgba(255, 255, 255, .5), 0 1px 1px rgba(0, 0, 0, .1); }
.run { position: absolute; left: 18px; bottom: 0; width: 8px; height: 4px; border-radius: 2px; background: #88846c; }
.run-active { left: 12px; width: 20px; background: #0078d4; }
.badge { position: absolute; left: 20px; top: 2px; width: 23px; height: 20px; border-radius: 10px; background: #0078d4; color: #fff; font-size: 14px; letter-spacing: -.3px; line-height: 20px; text-align: center; }
.tray { margin-left: auto; padding-right: 24px; display: flex; align-items: center; font-size: 15px; line-height: 20px; }
.cloud { margin-left: 22px; }
.sync { margin-left: 20px; }
.lang { width: 29px; margin-left: 23px; padding-bottom: 2px; display: flex; flex-direction: column; align-items: center; letter-spacing: -.55px; }
.wifi { margin-left: 23px; }
.vol { margin-left: 10px; }
.batt { margin-left: 9px; }
.clock { width: 82px; padding-bottom: 2px; margin-right: -1px; display: flex; flex-direction: column; align-items: flex-end; letter-spacing: -.23px; }

/* Alert */
.dialog { position: absolute; left: 679px; top: 103px; width: 562px; height: 185px; padding: 28px 20px 20px 25px; border: 1px solid #dcdce0; border-radius: 16px; background: #fff; box-shadow: 0 3px 8px rgba(0, 0, 0, .2); display: flex; flex-direction: column; white-space: nowrap; }
.dialog h1 { margin: 0; font-size: 18.500px; font-weight: 500; letter-spacing: .18px; line-height: 26px; }
.dialog p { margin: 13px 0 0; font-size: 15.500px; letter-spacing: -.18px; line-height: 22px; }
.ok { width: 80px; height: 47px; margin: 21px 5px 0 auto; flex: none; border-radius: 24px; background: #0d50be; color: #fff; font-size: 15px; font-weight: 600; letter-spacing: -.3px; box-shadow: 0 0 0 3px #fff, 0 0 0 5px #0b57d0; }
```
